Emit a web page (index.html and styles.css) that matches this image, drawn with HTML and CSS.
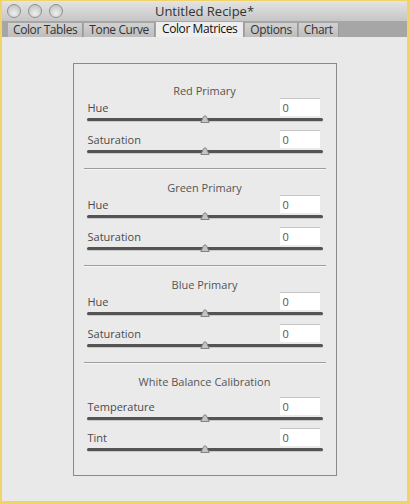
FILE: index.html
```html
<!DOCTYPE html>
<html>
<head>
<meta charset="utf-8">
<link rel="stylesheet" href="styles.css">
</head>
<body>
<div class="window">
  <div class="titlebar">
    <div class="lights">
      <span class="light"></span><span class="light"></span><span class="light"></span>
    </div>
    <div class="title">Untitled Recipe*</div>
    <div></div>
  </div>
  <div class="tabbar">
    <div class="tab">Color Tables</div>
    <div class="tab">Tone Curve</div>
    <div class="tab active">Color Matrices</div>
    <div class="tab">Options</div>
    <div class="tab">Chart</div>
  </div>
  <div class="content">
    <div class="panel">
      <div class="section">
        <div class="section-title">Red Primary</div>
        <div class="row"><span class="label">Hue</span><div class="field">0</div></div>
        <div class="slider"><div class="track"></div><svg class="thumb" width="10" height="8" viewBox="0 0 10 8"><path d="M0.8 7.5 L3.6 1.6 Q5 -0.2 6.4 1.6 L9.2 7.5 Z" fill="#c4c4c4" stroke="#7a7a7a" stroke-width="0.9"/></svg></div>
        <div class="row gap"><span class="label">Saturation</span><div class="field">0</div></div>
        <div class="slider"><div class="track"></div><svg class="thumb" width="10" height="8" viewBox="0 0 10 8"><path d="M0.8 7.5 L3.6 1.6 Q5 -0.2 6.4 1.6 L9.2 7.5 Z" fill="#c4c4c4" stroke="#7a7a7a" stroke-width="0.9"/></svg></div>
      </div>
      <div class="section">
        <div class="section-title">Green Primary</div>
        <div class="row"><span class="label">Hue</span><div class="field">0</div></div>
        <div class="slider"><div class="track"></div><svg class="thumb" width="10" height="8" viewBox="0 0 10 8"><path d="M0.8 7.5 L3.6 1.6 Q5 -0.2 6.4 1.6 L9.2 7.5 Z" fill="#c4c4c4" stroke="#7a7a7a" stroke-width="0.9"/></svg></div>
        <div class="row gap"><span class="label">Saturation</span><div class="field">0</div></div>
        <div class="slider"><div class="track"></div><svg class="thumb" width="10" height="8" viewBox="0 0 10 8"><path d="M0.8 7.5 L3.6 1.6 Q5 -0.2 6.4 1.6 L9.2 7.5 Z" fill="#c4c4c4" stroke="#7a7a7a" stroke-width="0.9"/></svg></div>
      </div>
      <div class="section">
        <div class="section-title">Blue Primary</div>
        <div class="row"><span class="label">Hue</span><div class="field">0</div></div>
        <div class="slider"><div class="track"></div><svg class="thumb" width="10" height="8" viewBox="0 0 10 8"><path d="M0.8 7.5 L3.6 1.6 Q5 -0.2 6.4 1.6 L9.2 7.5 Z" fill="#c4c4c4" stroke="#7a7a7a" stroke-width="0.9"/></svg></div>
        <div class="row gap"><span class="label">Saturation</span><div class="field">0</div></div>
        <div class="slider"><div class="track"></div><svg class="thumb" width="10" height="8" viewBox="0 0 10 8"><path d="M0.8 7.5 L3.6 1.6 Q5 -0.2 6.4 1.6 L9.2 7.5 Z" fill="#c4c4c4" stroke="#7a7a7a" stroke-width="0.9"/></svg></div>
      </div>
      <div class="section last">
        <div class="section-title wide">White Balance Calibration</div>
        <div class="row"><span class="label">Temperature</span><div class="field">0</div></div>
        <div class="slider"><div class="track"></div><svg class="thumb" width="10" height="8" viewBox="0 0 10 8"><path d="M0.8 7.5 L3.6 1.6 Q5 -0.2 6.4 1.6 L9.2 7.5 Z" fill="#c4c4c4" stroke="#7a7a7a" stroke-width="0.9"/></svg></div>
        <div class="row tight"><span class="label">Tint</span><div class="field">0</div></div>
        <div class="slider"><div class="track"></div><svg class="thumb" width="10" height="8" viewBox="0 0 10 8"><path d="M0.8 7.5 L3.6 1.6 Q5 -0.2 6.4 1.6 L9.2 7.5 Z" fill="#c4c4c4" stroke="#7a7a7a" stroke-width="0.9"/></svg></div>
      </div>
    </div>
  </div>
</div>
</body>
</html>
```
FILE: styles.css
```css
html, body {
  margin: 0;
  padding: 0;
  background: #e9e9e9;
}
.window {
  width: 410px;
  height: 504px;
  box-sizing: border-box;
  border-style: solid;
  border-color: #f1d466;
  border-width: 1px 3px 3px 2px;
  display: flex;
  flex-direction: column;
  background: #e9e9e9;
  font-family: "Open Sans", "DejaVu Sans", sans-serif;
  color: #4c4c4c;
  overflow: hidden;
}
.titlebar {
  height: 20px;
  flex: none;
  display: grid;
  grid-template-columns: 1fr auto 1fr;
  align-items: center;
  background: linear-gradient(#e4e4e4, #c6c6c6);
}
.lights {
  display: flex;
  gap: 7px;
  padding-left: 5px;
}
.light {
  width: 12px;
  height: 12px;
  border-radius: 50%;
  border: 1px solid #8e8e8e;
  background: radial-gradient(circle at 50% 70%, #eeeeee, #c9c9c9 70%);
}
.title {
  font-size: 13px;
  color: #333;
  line-height: 20px;
}
.tabbar {
  height: 16px;
  flex: none;
  display: flex;
  align-items: flex-end;
  gap: 1px;
  padding-left: 6px;
  background: #a6a6a6;
}
.tab {
  height: 14px;
  padding: 0 5px;
  font-size: 12px;
  letter-spacing: -0.4px;
  line-height: 14px;
  color: #333;
  background: linear-gradient(#d2d2d2, #bdbdbd);
  border-right: 1px solid #9a9a9a;
}
.tab.active {
  background: #eeeeee;
  color: #111;
  padding: 0 6px;
  height: 15px;
}
.content {
  flex: 1;
  padding-top: 26px;
}
.panel {
  width: 262px;
  margin: 0 auto;
  border: 1px solid #8a8a8a;
  padding: 8px 0 21px;
  background: #eaeaea;
}
.section {
  margin: 0 10px;
  padding: 12px 4px;
  border-bottom: 1px solid #9c9c9c;
  box-shadow: 0 1px 0 #f6f6f6;
}
.section.last {
  border-bottom: none;
  box-shadow: none;
  padding-bottom: 0;
}
.section-title {
  text-align: center;
  font-size: 11px;
  line-height: 14px;
  color: #555;
}
.section-title.wide {
  margin-bottom: 8px;
}
.row {
  display: flex;
  justify-content: space-between;
  align-items: center;
  height: 18px;
}
.row.gap {
  margin-top: 6px;
}
.row.tight {
  margin-top: 5px;
}
.label {
  font-size: 11px;
  line-height: 14px;
  color: #4a4a4a;
  padding-top: 1px;
}
.field {
  width: 37px;
  height: 17px;
  margin-right: 2px;
  padding-left: 3px;
  background: #ffffff;
  border-top: 1px solid #c4c4c4;
  font-size: 11px;
  line-height: 17px;
  color: #555;
}
.slider {
  position: relative;
  height: 8px;
  margin: 0 -1px;
}
.track {
  position: absolute;
  left: 0;
  right: 0;
  top: 2px;
  height: 3px;
  border-radius: 2px;
  background: #545454;
  box-shadow: 0 1px 0 #c9c9c9;
}
.thumb {
  position: absolute;
  left: 50%;
  top: -1px;
  margin-left: -5px;
}
```
